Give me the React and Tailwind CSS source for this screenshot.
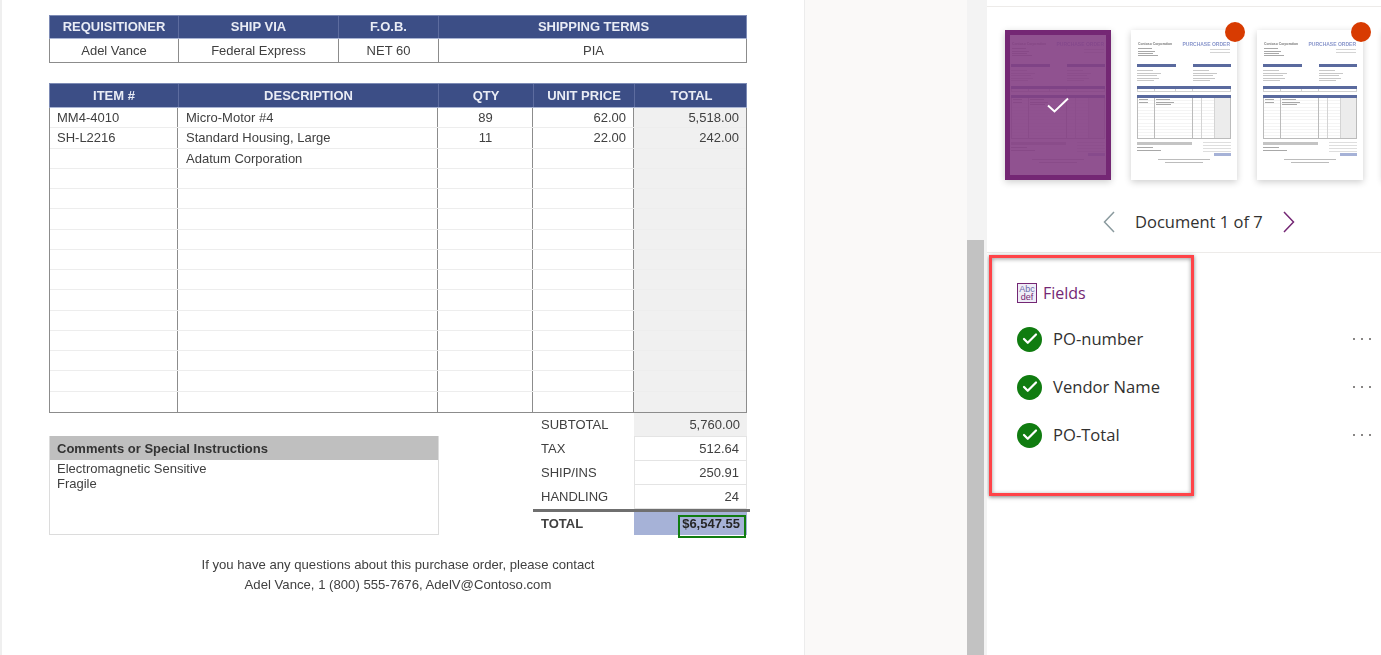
import { Check } from "lucide-react";

const sans = "font-['Liberation_Sans',Arial,sans-serif]";
const segoe = "font-['Open_Sans','Noto_Sans',sans-serif]";

const orderRows = [
  ["MM4-4010", "Micro-Motor #4", "89", "62.00", "5,518.00"],
  ["SH-L2216", "Standard Housing, Large", "11", "22.00", "242.00"],
  ["", "Adatum Corporation", "", "", ""],
  ...Array.from({ length: 12 }, () => ["", "", "", "", ""]),
];

const totals = [
  ["SUBTOTAL", "5,760.00", true],
  ["TAX", "512.64", false],
  ["SHIP/INS", "250.91", false],
  ["HANDLING", "24", false],
];

const fields = ["PO-number", "Vendor Name", "PO-Total"];

function HeaderCell({ children, className = "" }) {
  return (
    <div
      className={`flex items-center justify-center border-r border-[#5d6c9f] text-[13px] font-bold text-[#e9ecf5] last:border-r-0 ${className}`}
    >
      {children}
    </div>
  );
}

function ShippingTable() {
  return (
    <div className="w-[698px]">
      <div className="grid h-[24px] grid-cols-[129px_160px_100px_309px] border border-[#7d8bb5] border-b-[#a9b4d3] bg-[#3c4e86]">
        <HeaderCell>REQUISITIONER</HeaderCell>
        <HeaderCell>SHIP VIA</HeaderCell>
        <HeaderCell>F.O.B.</HeaderCell>
        <HeaderCell>SHIPPING TERMS</HeaderCell>
      </div>
      <div className="grid h-[24px] grid-cols-[129px_160px_100px_309px] border-x border-b border-[#8c8c8c] text-[13px] text-[#404040]">
        {["Adel Vance", "Federal Express", "NET 60", "PIA"].map((value) => (
          <div
            key={value}
            className="flex items-center justify-center border-r border-[#8c8c8c] pt-[1px] last:border-r-0"
          >
            {value}
          </div>
        ))}
      </div>
    </div>
  );
}

function ItemsTable() {
  return (
    <div className="mt-[20px] w-[698px]">
      <div className="grid h-[25px] grid-cols-[129px_260px_95px_101px_113px] border border-[#7d8bb5] border-b-[#a9b4d3] bg-[#3c4e86]">
        <HeaderCell>ITEM #</HeaderCell>
        <HeaderCell>DESCRIPTION</HeaderCell>
        <HeaderCell>QTY</HeaderCell>
        <HeaderCell>UNIT PRICE</HeaderCell>
        <HeaderCell>TOTAL</HeaderCell>
      </div>
      <div className="border-x border-b border-[#8c8c8c] text-[13px] text-[#404040]">
        {orderRows.map((row, index) => (
          <div
            key={index}
            className="grid h-[20.27px] grid-cols-[128px_260px_95px_101px_112px] border-b border-[#ededed] last:border-b-0"
          >
            <div className="truncate border-r border-[#8c8c8c] pl-[7px] leading-[19px]">{row[0]}</div>
            <div className="truncate border-r border-[#8c8c8c] pl-[8px] leading-[19px]">{row[1]}</div>
            <div className="border-r border-[#8c8c8c] pl-[1px] text-center leading-[19px]">{row[2]}</div>
            <div className="border-r border-[#8c8c8c] pr-[7px] text-right leading-[19px]">{row[3]}</div>
            <div className="bg-[#f0f0f0] pr-[7px] text-right leading-[19px]">{row[4]}</div>
          </div>
        ))}
      </div>
    </div>
  );
}

function Summary() {
  return (
    <div className="flex w-[698px] text-[#404040]">
      <div className="mt-[23px] h-[99px] w-[390px] border-x border-b border-[#dcdcdc]">
        <div className="flex h-[24px] items-center bg-[#bfbfbf] pl-[7px] pt-[2px] text-[13px] font-bold text-[#333333]">
          Comments or Special Instructions
        </div>
        <div className="pl-[7px] pt-[1px] text-[13px] leading-[15px]">
          <div>Electromagnetic Sensitive</div>
          <div>Fragile</div>
        </div>
      </div>
      <div className="ml-[94px] w-[214px] text-[13px]">
        {totals.map(([label, value, shaded]) => (
          <div key={label} className="flex h-[24px] items-center">
            <div className="w-[101px] pl-[8px]">{label}</div>
            <div
              className={`flex h-full w-[113px] items-center justify-end border-b border-[#e4e4e4] pr-[7px] ${
                shaded ? "bg-[#f0f0f0]" : "border-x"
              }`}
            >
              {value}
            </div>
          </div>
        ))}
        <div className="h-[3px] w-[217px] bg-[#6f6f6f]" />
        <div className="flex h-[23px] items-center">
          <div className="w-[101px] pl-[8px] font-bold">TOTAL</div>
          <div className="relative flex h-full w-[113px] items-center justify-end bg-[#a6b2d7] pr-[7px] font-bold text-[#262626]">
            $6,547.55
            <div className="absolute right-[1px] top-[3px] h-[23px] w-[68px] border-2 border-[#107c10]" />
          </div>
        </div>
      </div>
    </div>
  );
}

function MiniBar({ className = "" }) {
  return <div className={`h-[1px] bg-[#a8a8a8] ${className}`} />;
}

function MiniDoc({ muted }) {
  return (
    <div className={`h-full w-full px-[6px] pt-[11px] ${sans} blur-[0.45px] ${muted ? "opacity-50" : ""}`}>
      <div className="flex h-[23px] items-start justify-between">
        <div className="flex flex-col gap-[1.3px] pl-[1px] pt-[1px]">
          <div className="whitespace-nowrap text-[3.4px] font-bold leading-[4px] text-[#777777]">
            Contoso Corporation
          </div>
          <MiniBar className="mt-[1px] w-[14px]" />
          <MiniBar className="w-[17px]" />
          <MiniBar className="w-[15px]" />
          <MiniBar className="w-[20px]" />
        </div>
        <div className="flex flex-col items-end gap-[2px] pr-[1px]">
          <div className="whitespace-nowrap text-[5px] font-bold leading-[6px] text-[#8a97cc]">
            PURCHASE ORDER
          </div>
          <MiniBar className="w-[20px] bg-[#d4d4d4]" />
          <MiniBar className="w-[20px] bg-[#d4d4d4]" />
        </div>
      </div>
      <div className="flex h-[22px] justify-between">
        {["w-[39px]", "w-[38px]"].map((width) => (
          <div key={width} className={width}>
            <div className="h-[3px] bg-[#5a6a9e]" />
            <div className="mt-[3px] flex flex-col gap-[1.6px]">
              <MiniBar className="w-[16px] bg-[#c8c8c8]" />
              <MiniBar className="w-[24px] bg-[#c8c8c8]" />
              <MiniBar className="w-[20px] bg-[#c8c8c8]" />
              <MiniBar className="w-[22px] bg-[#c8c8c8]" />
              <MiniBar className="w-[17px] bg-[#c8c8c8]" />
            </div>
          </div>
        ))}
      </div>
      <div>
        <div className="h-[3px] bg-[#5a6a9e]" />
        <div className="flex h-[3px] border-x border-b border-[#d0d0d0]">
          <div className="w-[17px] border-r border-[#d0d0d0]" />
          <div className="w-[21px] border-r border-[#d0d0d0]" />
          <div className="w-[17px] border-r border-[#d0d0d0]" />
        </div>
      </div>
      <div className="mt-[3px]">
        <div className="h-[3px] bg-[#5a6a9e]" />
        <div className="flex h-[41px] border-x border-b border-[#bbbbbb] bg-[repeating-linear-gradient(to_bottom,transparent_0,transparent_2.2px,#f4f4f4_2.2px,#f4f4f4_3.2px)]">
          <div className="w-[17px] border-r border-[#bbbbbb] pl-[1px] pt-[1px]">
            <MiniBar className="w-[9px]" />
            <MiniBar className="mt-[1.5px] w-[9px]" />
          </div>
          <div className="w-[38px] border-r border-[#bbbbbb] pl-[1px] pt-[1px]">
            <MiniBar className="w-[14px]" />
            <MiniBar className="mt-[1.5px] w-[18px]" />
            <MiniBar className="mt-[1.5px] w-[15px]" />
          </div>
          <div className="w-[9px] border-r border-[#d4d4d4]" />
          <div className="w-[13px] border-r border-[#d4d4d4]" />
          <div className="flex-1 bg-[#ececec]" />
        </div>
      </div>
      <div className="mt-[3px] flex h-[14px] justify-between">
        <div className="w-[55px]">
          <div className="h-[3px] bg-[#c4c4c4]" />
          <MiniBar className="mt-[2px] w-[16px] bg-[#777777]" />
          <MiniBar className="mt-[2px] w-[24px] bg-[#777777]" />
        </div>
        <div className="flex w-[28px] flex-col gap-[2px]">
          <MiniBar className="bg-[#dedede]" />
          <MiniBar className="bg-[#dedede]" />
          <MiniBar className="bg-[#dedede]" />
          <MiniBar className="bg-[#dedede]" />
          <div className="ml-[11px] h-[3px] bg-[#a6b2d7]" />
        </div>
      </div>
      <div className="mt-[3px] flex flex-col items-center gap-[2px]">
        <MiniBar className="w-[52px] bg-[#bcbcbc]" />
        <MiniBar className="w-[38px] bg-[#bcbcbc]" />
      </div>
    </div>
  );
}

function Thumbnail({ selected, flagged, blank }) {
  return (
    <div className="relative h-[150px] w-[106px] shrink-0 bg-white shadow-[0_2px_7px_rgba(0,0,0,0.2)]">
      {blank ? null : <MiniDoc muted={selected} />}
      {selected ? (
        <div className="absolute inset-0 flex items-center justify-center border-[5px] border-[#742774] bg-[#742774]/80">
          <svg width="22" height="16" viewBox="0 0 22 16" fill="none">
            <path d="M1 8.5 L7.5 14.5 L21 1.5" stroke="white" strokeWidth="2" />
          </svg>
        </div>
      ) : null}
      {flagged ? (
        <div className="absolute right-[-8px] top-[-8px] h-[20px] w-[20px] rounded-full bg-[#d83b01]" />
      ) : null}
    </div>
  );
}

function FieldsIcon() {
  return (
    <div className="flex h-[20px] w-[20px] flex-col items-center justify-center border border-[#742774] bg-[#efedf7] font-['Liberation_Sans',sans-serif] text-[9px] leading-[8px] text-[#6d6aa8]">
      <span>Abc</span>
      <span className="text-[#742774]">def</span>
    </div>
  );
}

export default function App() {
  return (
    <div className="flex h-[655px] w-[1381px] overflow-hidden bg-white">
      <div className="w-[2px] shrink-0 bg-[#efefef]" />

      <div className={`w-[803px] shrink-0 border-r border-[#ececec] bg-white pl-[47px] pt-[15px] ${sans}`}>
        <div className="blur-[0.45px]">
          <ShippingTable />
          <ItemsTable />
          <Summary />
          <div className="mt-[20px] w-[698px] text-center text-[13.15px] leading-[20px] text-[#404040]">
            <div>If you have any questions about this purchase order, please contact</div>
            <div>Adel Vance, 1 (800) 555-7676, AdelV@Contoso.com</div>
          </div>
        </div>
      </div>

      <div className="w-[162px] shrink-0 bg-[#faf9f8]" />

      <div className="flex w-[20px] shrink-0 flex-col bg-[#f3f3f3] pt-[240px]">
        <div className="h-[415px] w-[17px] bg-[#c2c2c2]" />
      </div>

      <div className={`relative flex-1 overflow-hidden bg-white ${segoe}`}>
        <div className="h-[7px] border-b border-[#edebe9]" />

        <div className="flex gap-[20px] pl-[18px] pt-[23px]">
          <Thumbnail selected />
          <Thumbnail flagged />
          <Thumbnail flagged />
          <Thumbnail blank />
        </div>

        <div className="mt-[22px] flex h-[40px] items-center pl-[116px]">
          <svg width="12" height="22" viewBox="0 0 12 22" fill="none">
            <path d="M11 1 L1.5 11 L11 21" stroke="#8a9a9e" strokeWidth="1.5" />
          </svg>
          <span className="ml-[20px] whitespace-nowrap text-[16.5px] text-[#323130]">Document 1 of 7</span>
          <svg className="ml-[20px]" width="12" height="22" viewBox="0 0 12 22" fill="none">
            <path d="M1 1 L10.5 11 L1 21" stroke="#742774" strokeWidth="1.5" />
          </svg>
        </div>

        <div className="mt-[10px] border-t border-[#edebe9] pl-[30px] pr-[10px] pt-[30px]">
          <div className="flex items-center gap-[6px]">
            <FieldsIcon />
            <span className="text-[16px] leading-[20px] text-[#742774]">Fields</span>
          </div>
          <div className="mt-[12px]">
            {fields.map((name) => (
              <div key={name} className="flex h-[48px] items-center">
                <div className="flex h-[25px] w-[25px] items-center justify-center rounded-full bg-[#107c10]">
                  <Check size={18} strokeWidth={3} className="text-white" />
                </div>
                <span className="ml-[11px] text-[16.6px] text-[#323130]">{name}</span>
                <div className="ml-auto flex gap-[6px]">
                  <span className="h-[2px] w-[2px] rounded-full bg-[#605e5c]" />
                  <span className="h-[2px] w-[2px] rounded-full bg-[#605e5c]" />
                  <span className="h-[2px] w-[2px] rounded-full bg-[#605e5c]" />
                </div>
              </div>
            ))}
          </div>
        </div>

        {/* callout drawn over the panel */}
        <div className="absolute left-[2px] top-[255px] h-[241px] w-[205px] border-[3px] border-[#ff4348] shadow-[0_1px_4px_rgba(0,0,0,0.5),inset_0_1px_4px_rgba(0,0,0,0.4)]" />
      </div>
    </div>
  );
}
